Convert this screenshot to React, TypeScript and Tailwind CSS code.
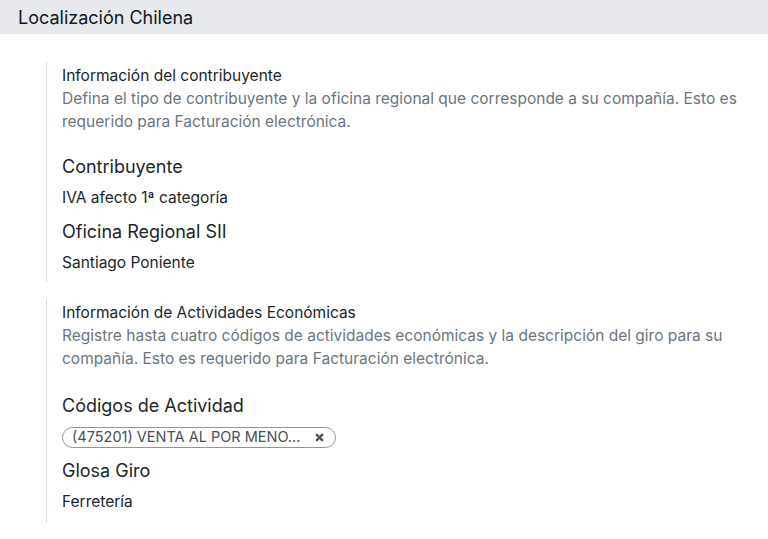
interface FieldProps {
  label: string;
  children: React.ReactNode;
}

const Field = ({ label, children }: FieldProps) => {
  return (
    <div className="flex flex-col">
      <div className="text-[18px] leading-[24px] text-[#212529]">{label}</div>
      <div className="mt-[7px] min-h-[24px] text-[15.5px] leading-[24px] text-[#212529] flex items-center">
        {children}
      </div>
    </div>
  );
};

interface SettingProps {
  title: string;
  description: string;
  spaced?: boolean;
  children: React.ReactNode;
}

const Setting = ({ title, description, spaced, children }: SettingProps) => {
  return (
    <div
      className={
        spaced
          ? "ml-[46px] border-l border-[#d8dadd] pl-[15px] pb-[9px] pr-4"
          : "ml-[46px] border-l border-[#d8dadd] pl-[15px] pb-[7px] pr-4"
      }
    >
      <div className="text-[15.5px] leading-[23px] text-[#212529] pt-[2px]">
        {title}
      </div>
      <div className="text-[15.5px] leading-[23px] text-[#6c757d] max-w-[680px]">
        {description}
      </div>
      <div
        className={
          spaced
            ? "mt-[24px] flex flex-col gap-[10px]"
            : "mt-[22px] flex flex-col gap-[10px]"
        }
      >
        {children}
      </div>
    </div>
  );
};

export default function App() {
  return (
    <div
      className="w-[768px] h-[539px] bg-white overflow-hidden"
      style={{ fontFamily: "Inter, 'Noto Sans', sans-serif" }}
    >
      <div className="h-[34px] bg-[#e7e9ed] flex items-center pl-[18px] text-[18px] text-[#111827]">
        Localización Chilena
      </div>

      <div className="pt-[28px] flex flex-col gap-[17px]">
        <Setting
          title="Información del contribuyente"
          description="Defina el tipo de contribuyente y la oficina regional que corresponde a su compañía. Esto es requerido para Facturación electrónica."
        >
          <Field label="Contribuyente">IVA afecto 1ª categoría</Field>
          <Field label="Oficina Regional SII">Santiago Poniente</Field>
        </Setting>

        <Setting
          spaced
          title="Información de Actividades Económicas"
          description="Registre hasta cuatro códigos de actividades económicas y la descripción del giro para su compañía. Esto es requerido para Facturación electrónica."
        >
          <Field label="Códigos de Actividad">
            <span className="inline-flex items-center h-[21px] rounded-full border border-[#8f959b] pl-[9px] pr-[11px] text-[14.5px] leading-none text-[#495057]">
              (475201) VENTA AL POR MENO...
              <svg
                viewBox="0 0 10 10"
                className="ml-[15px] w-[9px] h-[9px]"
                fill="none"
                stroke="#495057"
                strokeWidth={2.6}
                strokeLinecap="round"
              >
                <path d="M2 2 L8 8 M8 2 L2 8" />
              </svg>
            </span>
          </Field>
          <Field label="Glosa Giro">Ferretería</Field>
        </Setting>
      </div>
    </div>
  );
}
